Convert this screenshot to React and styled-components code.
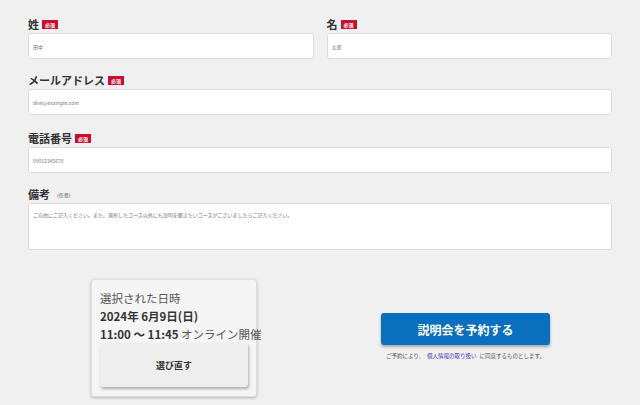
import React from "react";
import styled, { createGlobalStyle } from "styled-components";

const G = createGlobalStyle`
  html,body{margin:0;background:#f0f0f0;font-family:"Noto Sans CJK JP","Liberation Sans",sans-serif;}
  *{box-sizing:border-box;}
`;
const Page = styled.div`width:640px;height:405px;padding:15px 28px 0 28px;overflow:hidden;`;
const Row = styled.div`display:flex;gap:13px;margin-bottom:${p => p.mb || 12}px;`;
const Field = styled.div`flex:1;display:flex;flex-direction:column;`;
const Label = styled.div`display:flex;align-items:center;gap:3px;font-size:11px;font-weight:700;color:#333;height:18px;`;
const Req = styled.span`background:#c8102e;color:#fff;font-size:5px;padding:1px 3px;line-height:7px;font-weight:700;`;
const Opt = styled.span`font-size:5px;color:#555;font-weight:400;margin-left:4px;`;
const Input = styled.div`height:26px;background:#fff;border:1px solid #ddd;border-radius:3px;font-size:5px;color:#777;display:flex;align-items:center;padding-left:4px;`;
const Area = styled.div`height:47px;background:#fff;border:1px solid #ddd;border-radius:3px;font-size:5px;color:#777;padding:7px 4px;`;
const Bottom = styled.div`display:flex;margin-top:29px;`;
const Card = styled.div`width:166px;height:118px;margin-left:63px;background:#f5f5f5;border:1px solid #ddd;border-radius:3px;box-shadow:0 1px 3px rgba(0,0,0,.25);padding:9px 8px;`;
const CTitle = styled.div`font-size:11.5px;color:#555;line-height:18px;`;
const CDate = styled.div`font-size:11.5px;font-weight:700;color:#333;line-height:18px;`;
const CTime = styled.div`font-size:11.5px;color:#555;line-height:18px;white-space:nowrap;b{color:#333;}`;
const Redo = styled.div`height:44px;width:148px;background:#eee;border-radius:3px;box-shadow:1px 2px 3px rgba(0,0,0,.3);display:flex;align-items:center;justify-content:center;font-size:9px;font-weight:700;color:#333;`;
const Right = styled.div`margin-left:124px;padding-top:34px;display:flex;flex-direction:column;align-items:center;`;
const Btn = styled.div`width:169px;height:32px;background:#0a6fbc;border-radius:3px;box-shadow:0 2px 3px rgba(0,0,0,.3);color:#fff;font-size:12px;font-weight:700;display:flex;align-items:center;justify-content:center;`;
const Note = styled.div`font-size:5.5px;color:#555;margin-top:7px;white-space:nowrap;a{color:#3b3bb5;margin:0 3px;}`;

export default function App() {
  return (
    <Page>
      <G />
      <Row>
        <Field><Label>姓<Req>必須</Req></Label><Input>田中</Input></Field>
        <Field><Label>名<Req>必須</Req></Label><Input>太郎</Input></Field>
      </Row>
      <Row mb={14}>
        <Field><Label>メールアドレス<Req>必須</Req></Label><Input>dive@example.com</Input></Field>
      </Row>
      <Row mb={12}>
        <Field><Label>電話番号<Req>必須</Req></Label><Input>09012345678</Input></Field>
      </Row>
      <Row>
        <Field><Label>備考<Opt>(任意)</Opt></Label><Area>ご自由にご記入ください。また、選択したコース以外にも説明を聞きたいコースがございましたらご記入ください。</Area></Field>
      </Row>
      <Bottom>
        <Card>
          <CTitle>選択された日時</CTitle>
          <CDate>2024年 6月9日(日)</CDate>
          <CTime><b>11:00 〜 11:45</b> オンライン開催</CTime>
          <Redo>選び直す</Redo>
        </Card>
        <Right>
          <Btn>説明会を予約する</Btn>
          <Note>ご予約により、<a>個人情報の取り扱い</a>に同意するものとします。</Note>
        </Right>
      </Bottom>
    </Page>
  );
}
